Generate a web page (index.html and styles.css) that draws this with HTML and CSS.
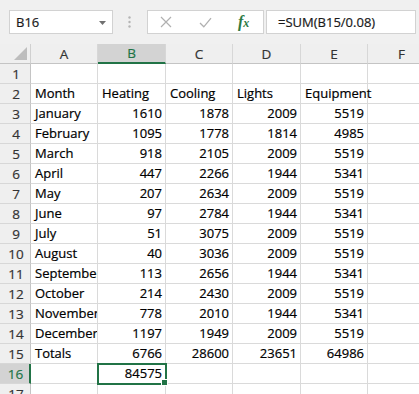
FILE: index.html
```html
<!DOCTYPE html>
<html>
<head>
<meta charset="utf-8">
<link rel="stylesheet" href="styles.css">
</head>
<body>
<div class="app">
  <div class="fbar">
    <div class="namebox">
      <span class="ref">B16</span>
      <svg class="drop" width="7" height="4" viewBox="0 0 7 4"><path d="M0 0H7L3.5 4Z" fill="#707070"/></svg>
    </div>
    <svg class="grip" width="3" height="12" viewBox="0 0 3 12"><circle cx="1.5" cy="1.5" r="1.2" fill="#b4b4b4"/><circle cx="1.5" cy="6" r="1.2" fill="#b4b4b4"/><circle cx="1.5" cy="10.5" r="1.2" fill="#b4b4b4"/></svg>
    <div class="btnbox">
      <svg class="ico" width="12" height="12" viewBox="0 0 12 12"><path d="M1 1L11 11M11 1L1 11" stroke="#b0b0b0" stroke-width="1.2" fill="none"/></svg>
      <svg class="ico" width="13" height="11" viewBox="0 0 13 11"><path d="M1 6L4.8 9.8L12 1.2" stroke="#b0b0b0" stroke-width="1.3" fill="none"/></svg>
      <span class="fx"><i>f</i><i class="x">x</i></span>
    </div>
    <div class="formula">=SUM(B15/0.08)</div>
  </div>

  <div class="sheet">
    <div class="corner"><svg width="13" height="13" viewBox="0 0 13 13"><path d="M13 0V13H0Z" fill="#bdbdbd"/></svg></div>
    <div class="ch">A</div><div class="ch sel">B</div><div class="ch">C</div><div class="ch">D</div><div class="ch">E</div><div class="ch">F</div>

    <div class="rh">1</div><div class="c"></div><div class="c"></div><div class="c"></div><div class="c"></div><div class="c"></div><div class="c"></div>
    <div class="rh">2</div><div class="c">Month</div><div class="c">Heating</div><div class="c">Cooling</div><div class="c">Lights</div><div class="c spill">Equipment</div><div class="c"></div>
    <div class="rh">3</div><div class="c">January</div><div class="c n">1610</div><div class="c n">1878</div><div class="c n">2009</div><div class="c n">5519</div><div class="c"></div>
    <div class="rh">4</div><div class="c">February</div><div class="c n">1095</div><div class="c n">1778</div><div class="c n">1814</div><div class="c n">4985</div><div class="c"></div>
    <div class="rh">5</div><div class="c">March</div><div class="c n">918</div><div class="c n">2105</div><div class="c n">2009</div><div class="c n">5519</div><div class="c"></div>
    <div class="rh">6</div><div class="c">April</div><div class="c n">447</div><div class="c n">2266</div><div class="c n">1944</div><div class="c n">5341</div><div class="c"></div>
    <div class="rh">7</div><div class="c">May</div><div class="c n">207</div><div class="c n">2634</div><div class="c n">2009</div><div class="c n">5519</div><div class="c"></div>
    <div class="rh">8</div><div class="c">June</div><div class="c n">97</div><div class="c n">2784</div><div class="c n">1944</div><div class="c n">5341</div><div class="c"></div>
    <div class="rh">9</div><div class="c">July</div><div class="c n">51</div><div class="c n">3075</div><div class="c n">2009</div><div class="c n">5519</div><div class="c"></div>
    <div class="rh">10</div><div class="c">August</div><div class="c n">40</div><div class="c n">3036</div><div class="c n">2009</div><div class="c n">5519</div><div class="c"></div>
    <div class="rh">11</div><div class="c">September</div><div class="c n">113</div><div class="c n">2656</div><div class="c n">1944</div><div class="c n">5341</div><div class="c"></div>
    <div class="rh">12</div><div class="c">October</div><div class="c n">214</div><div class="c n">2430</div><div class="c n">2009</div><div class="c n">5519</div><div class="c"></div>
    <div class="rh">13</div><div class="c">November</div><div class="c n">778</div><div class="c n">2010</div><div class="c n">1944</div><div class="c n">5341</div><div class="c"></div>
    <div class="rh">14</div><div class="c">December</div><div class="c n">1197</div><div class="c n">1949</div><div class="c n">2009</div><div class="c n">5519</div><div class="c"></div>
    <div class="rh">15</div><div class="c">Totals</div><div class="c n">6766</div><div class="c n">28600</div><div class="c n">23651</div><div class="c n">64986</div><div class="c"></div>
    <div class="rh selr">16</div><div class="c"></div><div class="c n active">84575</div><div class="c"></div><div class="c"></div><div class="c"></div><div class="c"></div>
    <div class="rh">17</div><div class="c"></div><div class="c"></div><div class="c"></div><div class="c"></div><div class="c"></div><div class="c"></div>
  </div>
</div>
</body>
</html>
```

FILE: styles.css
```css
* { box-sizing: border-box; }
html, body { margin: 0; padding: 0; }
body {
  width: 419px;
  height: 394px;
  overflow: hidden;
  background: #f0f0f0;
  font-family: "Open Sans", "Noto Sans", sans-serif;
  font-size: 13px;
  color: #000;
  -webkit-text-stroke: 0.2px currentColor;
}
.app { width: 419px; height: 394px; overflow: hidden; }

.fbar {
  display: flex;
  align-items: center;
  height: 44px;
  padding: 10px 0 10px 9px;
}
.namebox {
  width: 104px;
  height: 24px;
  background: #fff;
  border: 1px solid #d2d2d2;
  display: flex;
  align-items: center;
  justify-content: space-between;
  padding: 0 6px 0 6px;
}
.ref { color: #1a1a1a; }
.drop { margin-top: 1px; }
.grip { margin-left: 15px; margin-right: 16px; }
.btnbox {
  width: 117px;
  height: 24px;
  background: #fff;
  border: 1px solid #d2d2d2;
  display: flex;
  align-items: center;
  padding-left: 12px;
}
.btnbox .ico:nth-child(2) { margin-left: 27px; }
.fx {
  margin-left: 26px;
  color: #2c7a45;
  font-family: "Liberation Serif", serif;
  font-size: 16px;
  font-weight: bold;
  line-height: 1;
  -webkit-text-stroke: 0;
}
.fx i { font-style: italic; }
.fx .x { font-size: 12px; }
.formula {
  width: 150px;
  height: 24px;
  margin-left: 2px;
  background: #fff;
  border: 1px solid #d2d2d2;
  padding-left: 11px;
  line-height: 22px;
  color: #1a1a1a;
}

.sheet {
  display: grid;
  grid-template-columns: 31px 67px 68px 67px 68px 67px 68px;
  grid-auto-rows: 20px;
  background: #fff;
}
.corner, .ch, .rh {
  background: #efefef;
  color: #333;
  display: flex;
  align-items: center;
  justify-content: center;
  font-size: 13.5px;
}
.corner {
  border-right: 1px solid #d0d0d0;
  border-bottom: 1px solid #c4c4c4;
  justify-content: flex-end;
  align-items: flex-end;
  padding: 0 3px 3px 0;
}
.ch {
  border-right: 1px solid #d7d7d7;
  border-bottom: 1px solid #c4c4c4;
}
.ch.sel {
  background: #d3d3d3;
  color: #217346;
  border-bottom: 2px solid #217346;
}
.rh {
  border-right: 1px solid #c4c4c4;
  border-bottom: 1px solid #d7d7d7;
  padding-left: 2px;
}
.rh.selr {
  background: #d3d3d3;
  color: #217346;
  border-right: 2px solid #217346;
}
.c {
  border-right: 1px solid #dadada;
  border-bottom: 1px solid #dadada;
  white-space: nowrap;
  overflow: hidden;
  padding: 0 3px 0 4px;
  line-height: 19px;
  color: #000;
}
.c.n { text-align: right; }
.c.spill { overflow: visible; position: relative; z-index: 1; }
.c.active {
  position: relative;
  z-index: 2;
  overflow: visible;
  outline: 2px solid #217346;
  outline-offset: -1px;
}
.c.active::after {
  content: "";
  position: absolute;
  right: -3px;
  bottom: -3px;
  width: 5px;
  height: 5px;
  background: #217346;
  border: 1px solid #fff;
}
```
